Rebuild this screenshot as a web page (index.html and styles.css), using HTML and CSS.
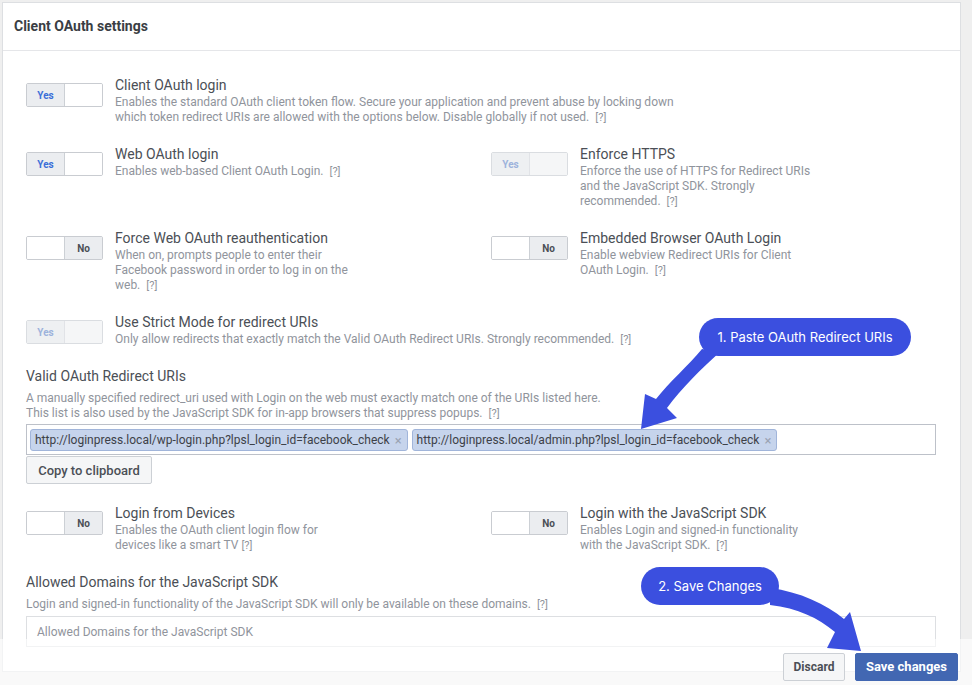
FILE: index.html
```html
<!DOCTYPE html>
<html>
<head>
<meta charset="utf-8">
<link rel="stylesheet" href="styles.css">
</head>
<body>
<div class="panel">
  <div class="panel-head">Client OAuth settings</div>
  <div class="panel-body">
    <div class="setting wide">
      <div class="toggle"><span class="on">Yes</span><span class="blank"></span></div>
      <div class="text">
        <div class="title">Client OAuth login</div>
        <div class="desc">Enables the standard OAuth client token flow. Secure your application and prevent abuse by locking down which token redirect URIs are allowed with the options below. Disable globally if not used.<span class="help">[?]</span></div>
      </div>
    </div>
    <div class="grid2">
      <div class="setting">
        <div class="toggle"><span class="on">Yes</span><span class="blank"></span></div>
        <div class="text">
          <div class="title">Web OAuth login</div>
          <div class="desc">Enables web-based Client OAuth Login.<span class="help">[?]</span></div>
        </div>
      </div>
      <div class="setting">
        <div class="toggle disabled"><span class="on">Yes</span><span class="blank"></span></div>
        <div class="text">
          <div class="title">Enforce HTTPS</div>
          <div class="desc">Enforce the use of HTTPS for Redirect URIs and the JavaScript SDK. Strongly recommended.<span class="help">[?]</span></div>
        </div>
      </div>
      <div class="setting">
        <div class="toggle"><span class="blank"></span><span class="off">No</span></div>
        <div class="text">
          <div class="title">Force Web OAuth reauthentication</div>
          <div class="desc">When on, prompts people to enter their Facebook password in order to log in on the web.<span class="help">[?]</span></div>
        </div>
      </div>
      <div class="setting">
        <div class="toggle"><span class="blank"></span><span class="off">No</span></div>
        <div class="text">
          <div class="title">Embedded Browser OAuth Login</div>
          <div class="desc">Enable webview Redirect URIs for Client OAuth Login.<span class="help">[?]</span></div>
        </div>
      </div>
    </div>
    <div class="setting wide">
      <div class="toggle disabled"><span class="on">Yes</span><span class="blank"></span></div>
      <div class="text">
        <div class="title">Use Strict Mode for redirect URIs</div>
        <div class="desc">Only allow redirects that exactly match the Valid OAuth Redirect URIs. Strongly recommended.<span class="help">[?]</span></div>
      </div>
    </div>
    <div class="field">
      <div class="label">Valid OAuth Redirect URIs</div>
      <div class="field-desc">A manually specified redirect_uri used with Login on the web must exactly match one of the URIs listed here.<br>This list is also used by the JavaScript SDK for in-app browsers that suppress popups.<span class="help">[?]</span></div>
      <div class="tagbox">
        <span class="tag">http://loginpress.local/wp-login.php?lpsl_login_id=facebook_check<span class="x">×</span></span>
        <span class="tag">http://loginpress.local/admin.php?lpsl_login_id=facebook_check<span class="x">×</span></span>
      </div>
      <div class="btn-row"><button class="btn copy">Copy to clipboard</button></div>
    </div>
    <div class="grid2">
      <div class="setting">
        <div class="toggle"><span class="blank"></span><span class="off">No</span></div>
        <div class="text">
          <div class="title">Login from Devices</div>
          <div class="desc">Enables the OAuth client login flow for devices like a smart TV <span class="help tight">[?]</span></div>
        </div>
      </div>
      <div class="setting">
        <div class="toggle"><span class="blank"></span><span class="off">No</span></div>
        <div class="text">
          <div class="title">Login with the JavaScript SDK</div>
          <div class="desc">Enables Login and signed-in functionality with the JavaScript SDK.<span class="help">[?]</span></div>
        </div>
      </div>
    </div>
    <div class="field">
      <div class="label">Allowed Domains for the JavaScript SDK</div>
      <div class="field-desc">Login and signed-in functionality of the JavaScript SDK will only be available on these domains.<span class="help">[?]</span></div>
      <div class="input">Allowed Domains for the JavaScript SDK</div>
    </div>
  </div>
</div>

<div class="footer">
  <button class="btn discard">Discard</button>
  <button class="btn primary">Save changes</button>
</div>

<div class="callout c1">1. Paste OAuth Redirect URIs</div>
<div class="callout c2">2. Save Changes</div>
<svg class="arrows" width="972" height="685" viewBox="0 0 972 685">
  <path d="M 702 349 C 688 366 670 381 656 399 L 645 394 L 641 429 L 677 418 L 667 408 C 682 388 700 370 720 352 Z" fill="#3b4fdf"/>
  <path d="M 770 588 C 800 592 826 604 844 619 L 850 612 L 861 651 L 827 648 L 835 632 C 818 618 798 608 770 605 Z" fill="#3b4fdf"/>
</svg>
</body>
</html>
```
FILE: styles.css
```css
html, body {
  height: 685px;
  overflow: hidden;
}
body {
  margin: 2px 0 0 2px;
  background: #efefef;
  font-family: Roboto, "Liberation Sans", Arial, sans-serif;
  color: #4b4f56;
}
.panel {
  width: 957px;
  border: 1px solid #dddfe2;
  background: #fff;
}
.panel-head {
  height: 48px;
  padding: 0 0 2px 11px;
  box-sizing: border-box;
  border-bottom: 1px solid #e5e6e9;
  display: flex;
  align-items: center;
  font-size: 14px;
  font-weight: 700;
  color: #3a3e44;
}
.panel-body {
  padding: 25px 24px 24px 23px;
  display: flex;
  flex-direction: column;
  gap: 20px;
}
.grid2 {
  display: grid;
  grid-template-columns: 465px 1fr;
  row-gap: 20px;
}
.setting {
  display: flex;
  align-items: flex-start;
}
.toggle {
  flex: none;
  display: flex;
  width: 77px;
  height: 24px;
  box-sizing: border-box;
  border: 1px solid #c9ccd1;
  border-radius: 2px;
  margin: 7px 12px 0 0;
  font-size: 10px;
  font-weight: 700;
  overflow: hidden;
}
.toggle span {
  flex: 1;
  display: flex;
  align-items: center;
  justify-content: center;
}
.toggle .on {
  background: #ebedf0;
  color: #3b6fd8;
  border-right: 1px solid #ccd0d5;
}
.toggle .off {
  background: #ebedf0;
  color: #4b4f56;
  border-left: 1px solid #ccd0d5;
}
.toggle .blank {
  background: #fff;
}
.toggle.disabled {
  border-color: #dadde1;
}
.toggle.disabled .on {
  background: #eef0f2;
  color: #9db3dc;
  border-right-color: #e1e3e7;
}
.toggle.disabled .blank {
  background: #f5f6f7;
}
.text {
  width: 238px;
}
.wide .text {
  width: 575px;
}
.title {
  font-size: 14px;
  line-height: 18px;
  color: #4b4f56;
}
.desc, .field-desc {
  font-size: 12px;
  line-height: 15px;
  color: #90949c;
}
.desc {
  margin-top: 1px;
}
.help {
  margin-left: 6px;
  font-size: 11px;
  line-height: 15px;
}
.help.tight {
  margin-left: 0;
}
.label {
  font-size: 14px;
  line-height: 18px;
  color: #4b4f56;
}
.field-desc {
  margin-top: 6px;
}
.tagbox {
  margin-top: 3px;
  height: 31px;
  box-sizing: border-box;
  border: 1px solid #bdc1c9;
  padding: 4px 3px;
  display: flex;
  gap: 4px;
}
.tag {
  height: 22px;
  box-sizing: border-box;
  display: flex;
  align-items: center;
  padding: 0 5px 0 4px;
  background: #c6d4ec;
  border: 1px solid #a1b5da;
  border-radius: 3px;
  font-size: 12px;
  color: #3d4148;
  white-space: nowrap;
}
.tag .x {
  margin-left: 5px;
  color: #9aa3b3;
  font-size: 13px;
}
.btn-row {
  margin-top: 1px;
  display: flex;
}
.btn {
  font-family: Roboto, "Liberation Sans", Arial, sans-serif;
  height: 28px;
  padding: 0 11px;
  border: 1px solid #ccd0d5;
  border-radius: 2px;
  background: #f5f6f7;
  color: #4b4f56;
  font-size: 12px;
  font-weight: 700;
}
.copy {
  width: 126px;
  padding: 0;
  font-size: 13px;
  font-weight: 500;
}
.input {
  margin-top: 4px;
  height: 31px;
  box-sizing: border-box;
  border: 1px solid #dddfe2;
  display: flex;
  align-items: center;
  padding-left: 10px;
  font-size: 12px;
  color: #90949c;
}
.footer {
  position: fixed;
  left: 0;
  right: 0;
  bottom: 0;
  height: 46px;
  background: rgba(255, 255, 255, 0.62);
  display: flex;
  justify-content: flex-end;
  align-items: center;
  gap: 10px;
  padding-right: 14px;
  padding-top: 9px;
  box-sizing: border-box;
}
.discard {
  width: 62px;
  padding: 0;
}
.primary {
  width: 103px;
  padding: 0;
  background: #4267b2;
  border-color: #4267b2;
  color: #fff;
  font-size: 13px;
}
.callout {
  position: absolute;
  background: #3b4fdf;
  color: #fff;
  font-family: Inter, "Noto Sans", sans-serif;
  font-size: 13px;
  border-radius: 20px;
  display: flex;
  align-items: center;
  justify-content: center;
  z-index: 3;
}
.c1 {
  left: 699px;
  top: 318px;
  width: 212px;
  height: 38px;
}
.c2 {
  left: 641px;
  top: 567px;
  width: 138px;
  height: 38px;
}
.arrows {
  position: absolute;
  left: 0;
  top: 0;
  z-index: 4;
  pointer-events: none;
}
```
